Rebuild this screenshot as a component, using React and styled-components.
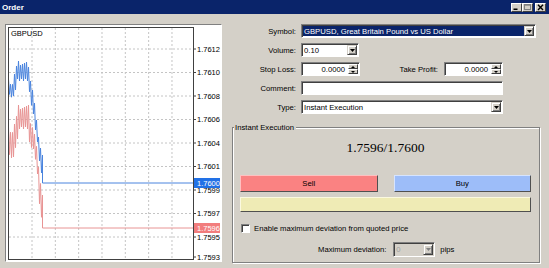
import styled, { createGlobalStyle } from "styled-components";

const GlobalStyle = createGlobalStyle`
  html, body {
    margin: 0;
    padding: 0;
    background: #d4d0c8;
  }
  body {
    font-family: "Liberation Sans", Arial, sans-serif;
    font-size: 7.7px;
    color: #000;
  }
`;

const Window = styled.div`
  width: 549px;
  height: 268px;
  background: #d4d0c8;
  display: flex;
  flex-direction: column;
  overflow: hidden;
`;

const TitleBar = styled.div`
  height: 14px;
  background: #0a246a;
  display: flex;
  align-items: center;
  padding: 0 3px 0 2px;
`;

const Title = styled.div`
  flex: 1;
  color: #fff;
  font-weight: bold;
  font-size: 8px;
`;

const TitleButton = styled.div`
  width: 11px;
  height: 9px;
  box-sizing: border-box;
  background: #d4d0c8;
  border: 1px solid;
  border-color: #fff #404040 #404040 #fff;
  margin-left: ${({ $gap }) => ($gap ? 2 : 0)}px;
  display: flex;
`;

const Body = styled.div`
  display: flex;
  gap: 10px;
  padding: 10px 0 0 5px;
`;

const ChartFrame = styled.div`
  width: 217px;
  height: 238px;
  box-sizing: border-box;
  background: #fff;
  border: 1px solid;
  border-color: #808080 #fff #fff #808080;
  padding: 2px 0 0 2px;
  display: flex;
`;

const Panel = styled.div`
  width: 308px;
  display: flex;
  flex-direction: column;
`;

const Form = styled.div`
  display: grid;
  grid-template-columns: 64px 1fr;
  grid-auto-rows: 14px;
  column-gap: 5px;
  row-gap: 5px;
  align-items: center;
`;

const Label = styled.label`
  text-align: right;
  white-space: nowrap;
  margin-left: ${({ $auto }) => ($auto ? "auto" : 0)};
`;

const Line = styled.div`
  display: flex;
  align-items: center;
  width: 202px;
  gap: 6px;
`;

const Field = styled.div`
  box-sizing: border-box;
  width: ${({ $w }) => $w}px;
  height: ${({ $h }) => $h || 14}px;
  background: ${({ $disabled }) => ($disabled ? "#d4d0c8" : "#fff")};
  border: 1px solid;
  border-color: #808080 #fff #fff #808080;
  box-shadow: inset 1px 1px #404040;
  display: flex;
  padding: 1px;
`;

const FieldText = styled.div`
  flex: 1;
  display: flex;
  align-items: center;
  justify-content: ${({ $right }) => ($right ? "flex-end" : "flex-start")};
  padding: 0 3px 0 1px;
  background: ${({ $selected }) => ($selected ? "#0a246a" : "transparent")};
  color: ${({ $selected, $disabled }) =>
    $selected ? "#fff" : $disabled ? "#a0a0a0" : "#000"};
  white-space: nowrap;
  overflow: hidden;
`;

const DropButton = styled.div`
  width: 10px;
  box-sizing: border-box;
  background: #d4d0c8;
  border: 1px solid;
  border-color: #d4d0c8 #404040 #404040 #d4d0c8;
  box-shadow: inset 1px 1px #fff, inset -1px -1px #808080;
  display: flex;
  align-items: center;
  justify-content: center;
`;

const Spin = styled.div`
  width: 10px;
  display: flex;
  flex-direction: column;
`;

const SpinHalf = styled.div`
  flex: 1;
  box-sizing: border-box;
  background: #d4d0c8;
  border: 1px solid;
  border-color: #fff #404040 #404040 #fff;
  display: flex;
  align-items: center;
  justify-content: center;
`;

const Group = styled.div`
  position: relative;
  box-sizing: border-box;
  height: 136px;
  margin-top: 13px;
  padding: 12px 8px 0 7px;
  border: 1px solid #808080;
  box-shadow: inset 1px 1px #fff, 1px 1px #fff;
  display: flex;
  flex-direction: column;
`;

const Caption = styled.div`
  position: absolute;
  top: -5px;
  left: 1px;
  padding: 0 2px 0 1px;
  line-height: 9px;
  background: #d4d0c8;
`;

const Quote = styled.div`
  height: 16px;
  line-height: 16px;
  text-align: center;
  font-family: "Liberation Serif", "Times New Roman", serif;
  font-size: 13.5px;
`;

const ButtonRow = styled.div`
  display: flex;
  gap: 16px;
  margin-top: 19px;
`;

const TradeButton = styled.div`
  flex: 1;
  height: 17px;
  box-sizing: border-box;
  background: ${({ $bg }) => $bg};
  border: 1px solid;
  border-color: ${({ $light }) => $light} #505050 #505050 ${({ $light }) => $light};
  display: flex;
  align-items: center;
  justify-content: center;
`;

const StatusBar = styled.div`
  margin-top: 5px;
  height: 15px;
  box-sizing: border-box;
  background: #efebb5;
  border: 1px solid;
  border-color: #fbf9e0 #505050 #505050 #fbf9e0;
`;

const CheckRow = styled.div`
  margin-top: 9px;
  height: 14px;
  display: flex;
  align-items: center;
  gap: 4px;
  padding-left: 1px;
`;

const CheckBox = styled.div`
  width: 9px;
  height: 9px;
  box-sizing: border-box;
  background: #fff;
  border: 1px solid;
  border-color: #808080 #fff #fff #808080;
  box-shadow: inset 1px 1px #404040;
`;

const DeviationRow = styled.div`
  margin-top: 7px;
  height: 15px;
  display: flex;
  align-items: center;
  padding-left: 78px;
  gap: 7px;
`;

const Pips = styled.span`
  margin-left: -2px;
`;

const Arrow = ({ color = "#000" }) => (
  <svg width="5" height="3" viewBox="0 0 5 3">
    <polygon points="0,0 5,0 2.5,3" fill={color} />
  </svg>
);

const SmallArrow = ({ dir }) => (
  <svg width="4" height="2" viewBox="0 0 4 2">
    <polygon points={dir === "down" ? "0,0 4,0 2,2" : "0,2 4,2 2,0"} fill="#000" />
  </svg>
);

const Spinner = () => (
  <Spin>
    <SpinHalf>
      <SmallArrow dir="up" />
    </SpinHalf>
    <SpinHalf>
      <SmallArrow dir="down" />
    </SpinHalf>
  </Spin>
);

// chart data (svg coordinates): x0, x1, top0, top1, bottom0, bottom1
const askSegments = [
  [0, 5, 52, 55, 70, 72],
  [6, 8, 45, 38, 68, 60],
  [9, 19, 34, 34, 55, 55],
  [20, 24, 40, 60, 62, 85],
  [25, 30, 65, 110, 90, 125],
  [31, 34, 113, 125, 135, 156],
];

const bidSegments = [
  [0, 5, 100, 103, 130, 133],
  [6, 9, 95, 85, 125, 115],
  [10, 20, 78, 78, 103, 103],
  [21, 25, 90, 100, 118, 125],
  [26, 29, 105, 125, 125, 150],
  [30, 34, 140, 165, 170, 201],
];

const zigzag = (segments, last) => {
  const pts = [];
  segments.forEach(([x0, x1, t0, t1, b0, b1]) => {
    for (let x = x0; x <= x1; x++) {
      const k = x1 === x0 ? 0 : (x - x0) / (x1 - x0);
      const y =
        x % 2 === 0
          ? t0 + (t1 - t0) * k + ((x * 7) % 5)
          : b0 + (b1 - b0) * k - ((x * 3) % 4);
      pts.push(`${x + 0.5},${y}`);
    }
  });
  pts.push(`34.5,${last}`, `185,${last}`);
  return pts.join(" ");
};

const gridY = [0, 1, 2, 3, 4, 5, 6, 7, 8].map((i) => 22 + i * 23.5);
const gridX = [0, 1, 2, 3, 4, 5, 6].map((i) => 24 + i * 23.33);
const priceLabels = [
  "1.7612",
  "1.7610",
  "1.7608",
  "1.7606",
  "1.7604",
  "1.7601",
  "1.7599",
  "1.7597",
  "1.7595",
  "1.7593",
];
const labelY = [...gridY, 230];

const Chart = () => (
  <svg
    width="213"
    height="234"
    viewBox="0 0 213 234"
    fontFamily="Liberation Sans, Arial, sans-serif"
    fontSize="7.5"
  >
    {gridY.map((y) => (
      <line key={y} x1="1" x2="185" y1={y} y2={y} stroke="#c4c4c4" strokeDasharray="2,2" />
    ))}
    {gridX.map((x) => (
      <line key={x} x1={x} x2={x} y1="1" y2="232" stroke="#c4c4c4" strokeDasharray="2,2" />
    ))}
    <polyline points={zigzag(bidSegments, 201)} fill="none" stroke="#e89494" strokeWidth="1" />
    <polyline points={zigzag(askSegments, 156)} fill="none" stroke="#4a84de" strokeWidth="1" />
    <rect x="0.5" y="0.5" width="185" height="232" fill="none" stroke="#404040" />
    <text x="3" y="9" fill="#000">GBPUSD</text>
    {labelY.map((y, i) => (
      <g key={i}>
        <line x1="185" x2="188" y1={y} y2={y} stroke="#404040" />
        <text x="189" y={y + 2.7} fill="#000">
          {priceLabels[i]}
        </text>
      </g>
    ))}
    <rect x="186" y="151" width="26" height="10" fill="#2271e6" />
    <text x="189" y="158.7" fill="#fff">1.7600</text>
    <rect x="186" y="196" width="26" height="10" fill="#f27d7d" />
    <text x="189" y="203.7" fill="#fff">1.7596</text>
  </svg>
);

export default function App() {
  return (
    <Window>
      <GlobalStyle />
      <TitleBar>
        <Title>Order</Title>
        <TitleButton>
          <svg width="9" height="7" viewBox="0 0 9 7">
            <rect x="1.5" y="4.5" width="4" height="1.5" fill="#000" />
          </svg>
        </TitleButton>
        <TitleButton>
          <svg width="9" height="7" viewBox="0 0 9 7">
            <rect x="1.5" y="0.5" width="6" height="5" fill="none" stroke="#808080" />
            <line x1="1.5" x2="7.5" y1="1.2" y2="1.2" stroke="#808080" />
          </svg>
        </TitleButton>
        <TitleButton $gap>
          <svg width="9" height="7" viewBox="0 0 9 7">
            <path d="M2 0.8 L7 6 M7 0.8 L2 6" stroke="#000" strokeWidth="1.4" />
          </svg>
        </TitleButton>
      </TitleBar>
      <Body>
        <ChartFrame>
          <Chart />
        </ChartFrame>
        <Panel>
          <Form>
            <Label>Symbol:</Label>
            <Field $w={235}>
              <FieldText $selected>GBPUSD, Great Britain Pound vs US Dollar</FieldText>
              <DropButton>
                <Arrow />
              </DropButton>
            </Field>
            <Label>Volume:</Label>
            <Field $w={58}>
              <FieldText>0.10</FieldText>
              <DropButton>
                <Arrow />
              </DropButton>
            </Field>
            <Label>Stop Loss:</Label>
            <Line>
              <Field $w={59}>
                <FieldText $right>0.0000</FieldText>
                <Spinner />
              </Field>
              <Label $auto>Take Profit:</Label>
              <Field $w={59}>
                <FieldText $right>0.0000</FieldText>
                <Spinner />
              </Field>
            </Line>
            <Label>Comment:</Label>
            <Field $w={202}>
              <FieldText />
            </Field>
            <Label>Type:</Label>
            <Field $w={202}>
              <FieldText>Instant Execution</FieldText>
              <DropButton>
                <Arrow />
              </DropButton>
            </Field>
          </Form>
          <Group>
            <Caption>Instant Execution</Caption>
            <Quote>1.7596/1.7600</Quote>
            <ButtonRow>
              <TradeButton $bg="#fa8282" $light="#ffc0c0">Sell</TradeButton>
              <TradeButton $bg="#9dbdf9" $light="#d6e4ff">Buy</TradeButton>
            </ButtonRow>
            <StatusBar />
            <CheckRow>
              <CheckBox />
              <span>Enable maximum deviation from quoted price</span>
            </CheckRow>
            <DeviationRow>
              <span>Maximum deviation:</span>
              <Field $w={42} $h={15} $disabled>
                <FieldText $disabled>0</FieldText>
                <DropButton>
                  <Arrow color="#808080" />
                </DropButton>
              </Field>
              <Pips>pips</Pips>
            </DeviationRow>
          </Group>
        </Panel>
      </Body>
    </Window>
  );
}
